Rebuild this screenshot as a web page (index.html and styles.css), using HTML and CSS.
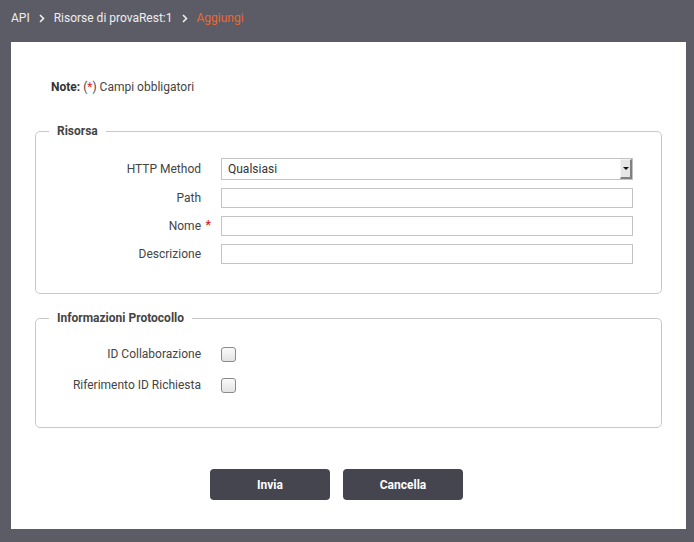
FILE: index.html
```html
<!DOCTYPE html>
<html lang="it">
<head>
<meta charset="utf-8">
<title>Aggiungi risorsa</title>
<link rel="stylesheet" href="styles.css">
</head>
<body>
<header class="topbar">
  <nav class="crumbs">
    <span class="crumb">API</span>
    <svg class="sep" width="6" height="9" viewBox="0 0 6 9"><path d="M1 1 L4.5 4.5 L1 8" fill="none" stroke="#eeeeee" stroke-width="1.6"/></svg>
    <span class="crumb">Risorse di provaRest:1</span>
    <svg class="sep" width="6" height="9" viewBox="0 0 6 9"><path d="M1 1 L4.5 4.5 L1 8" fill="none" stroke="#eeeeee" stroke-width="1.6"/></svg>
    <span class="crumb current">Aggiungi</span>
  </nav>
</header>
<main class="panel">
  <p class="note"><b>Note:</b> (<span class="req">*</span>) Campi obbligatori</p>

  <fieldset class="box box-risorsa">
    <legend>Risorsa</legend>
    <div class="row row-select">
      <label class="lbl">HTTP Method</label>
      <div class="select">
        <span class="select-text">Qualsiasi</span>
        <span class="select-btn"><span class="tri"></span></span>
      </div>
    </div>
    <div class="row">
      <label class="lbl">Path</label>
      <div class="input"></div>
    </div>
    <div class="row">
      <label class="lbl">Nome<span class="star">*</span></label>
      <div class="input"></div>
    </div>
    <div class="row">
      <label class="lbl">Descrizione</label>
      <div class="input"></div>
    </div>
  </fieldset>

  <fieldset class="box box-proto">
    <legend>Informazioni Protocollo</legend>
    <div class="row crow">
      <label class="lbl">ID Collaborazione</label>
      <span class="check"></span>
    </div>
    <div class="row crow">
      <label class="lbl">Riferimento ID Richiesta</label>
      <span class="check"></span>
    </div>
  </fieldset>

  <div class="actions">
    <button class="btn">Invia</button>
    <button class="btn">Cancella</button>
  </div>
</main>
</body>
</html>
```

FILE: styles.css
```css
html, body {
  margin: 0;
  padding: 0;
}
body {
  background: #5c5c66;
  font-family: Roboto, "Liberation Sans", sans-serif;
  font-size: 12px;
  color: #444;
  width: 694px;
  height: 542px;
  overflow: hidden;
}
.topbar {
  height: 42px;
  display: flex;
  align-items: center;
  padding-left: 11px;
  box-sizing: border-box;
}
.crumbs {
  display: flex;
  align-items: center;
  gap: 9px;
  font-size: 12px;
  color: #eeeeee;
  margin-top: -7px;
}
.sep {
  display: block;
  margin-top: 1px;
}
.current {
  color: #f0662a;
}
.panel {
  margin: 0 8px 0 11px;
  height: 487px;
  background: #fff;
  box-sizing: border-box;
  padding: 37px 24px 0 24px;
}
.note {
  margin: 0 0 0 16px;
  line-height: 16px;
  color: #444;
}
.note b {
  color: #333;
}
.req {
  color: #e21f1f;
}
.box {
  margin: 0;
  border: 1px solid #c8c8c8;
  border-radius: 5px;
  padding: 0;
  min-width: 0;
}
.box legend {
  font-weight: bold;
  color: #444;
  padding: 0 8px;
  margin-left: 13px;
  font-size: 12px;
  line-height: 14px;
}
.box-risorsa {
  margin-top: 29px;
  padding: 20px 0 29px 0;
}
.box-proto {
  margin-top: 17px;
  padding: 21px 0 34px 0;
}
.row {
  display: flex;
  align-items: center;
  gap: 20px;
  margin-bottom: 8px;
  height: 20px;
}
.row:last-child {
  margin-bottom: 0;
}
.row-select {
  height: 22px;
}
.lbl {
  width: 165px;
  text-align: right;
  flex: none;
  position: relative;
  color: #444;
}
.star {
  position: absolute;
  right: -10px;
  top: -1px;
  color: #e21f1f;
  font-weight: bold;
}
.input {
  width: 412px;
  height: 20px;
  box-sizing: border-box;
  border: 1px solid #c4c4c4;
  background: #fff;
}
.select {
  width: 412px;
  height: 22px;
  box-sizing: border-box;
  border: 1px solid #c4c4c4;
  background: #fff;
  display: flex;
  align-items: stretch;
}
.select-text {
  flex: 1;
  padding-left: 6px;
  line-height: 20px;
  color: #333;
}
.select-btn {
  width: 12px;
  box-sizing: border-box;
  background: #e6e6e6;
  border-left: 1px solid #f4f4f4;
  border-top: 1px solid #f4f4f4;
  border-right: 2px solid #808080;
  border-bottom: 2px solid #808080;
  display: flex;
  align-items: center;
  justify-content: center;
}
.tri {
  width: 0;
  height: 0;
  border-left: 3px solid transparent;
  border-right: 3px solid transparent;
  border-top: 3px solid #111;
}
.crow {
  height: 16px;
  margin-bottom: 15px;
}
.check {
  width: 15px;
  height: 15px;
  box-sizing: border-box;
  border: 1px solid #8a8a8a;
  border-radius: 3px;
  background: linear-gradient(#fafafa, #e4e4e4);
}
.actions {
  display: flex;
  gap: 13px;
  margin-top: 41px;
  padding-left: 175px;
}
.btn {
  width: 120px;
  height: 31px;
  border: none;
  border-radius: 4px;
  background: #45454f;
  color: #fff;
  font-family: Roboto, "Liberation Sans", sans-serif;
  font-weight: bold;
  font-size: 12px;
  padding: 0;
}
```
